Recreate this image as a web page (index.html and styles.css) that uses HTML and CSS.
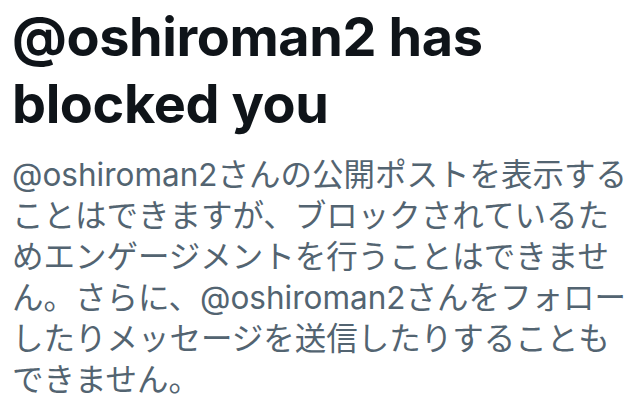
FILE: index.html
```html
<!DOCTYPE html>
<html lang="ja">
<head>
    <meta charset="UTF-8">
    <meta name="viewport" content="width=device-width, initial-scale=1.0">
    <title>Blocked</title>
    <link rel="stylesheet" href="styles.css">
</head>
<body>
    <div class="container">
        <h1 class="title">@oshiroman2 has blocked you</h1>
        <p class="message">@oshiroman2さんの公開ポストを表示することはできますが、ブロックされているためエンゲージメントを行うことはできません。さらに、@oshiroman2さんをフォローしたりメッセージを送信したりすることもできません。</p>
    </div>
</body>
</html>
```

FILE: styles.css
```css
body {
    margin: 0;
    background: #fff;
    font-family: Inter, "Noto Sans CJK JP", sans-serif;
}
.container {
    padding: 3px 12px 0 12px;
}
.title {
    margin: 0;
    font-size: 54px;
    line-height: 67px;
    font-weight: 700;
    color: #0f1419;
    letter-spacing: -0.4px;
}
.message {
    margin: 17px 0 0 0;
    font-size: 31.5px;
    line-height: 41px;
    color: #536471;
}
```
